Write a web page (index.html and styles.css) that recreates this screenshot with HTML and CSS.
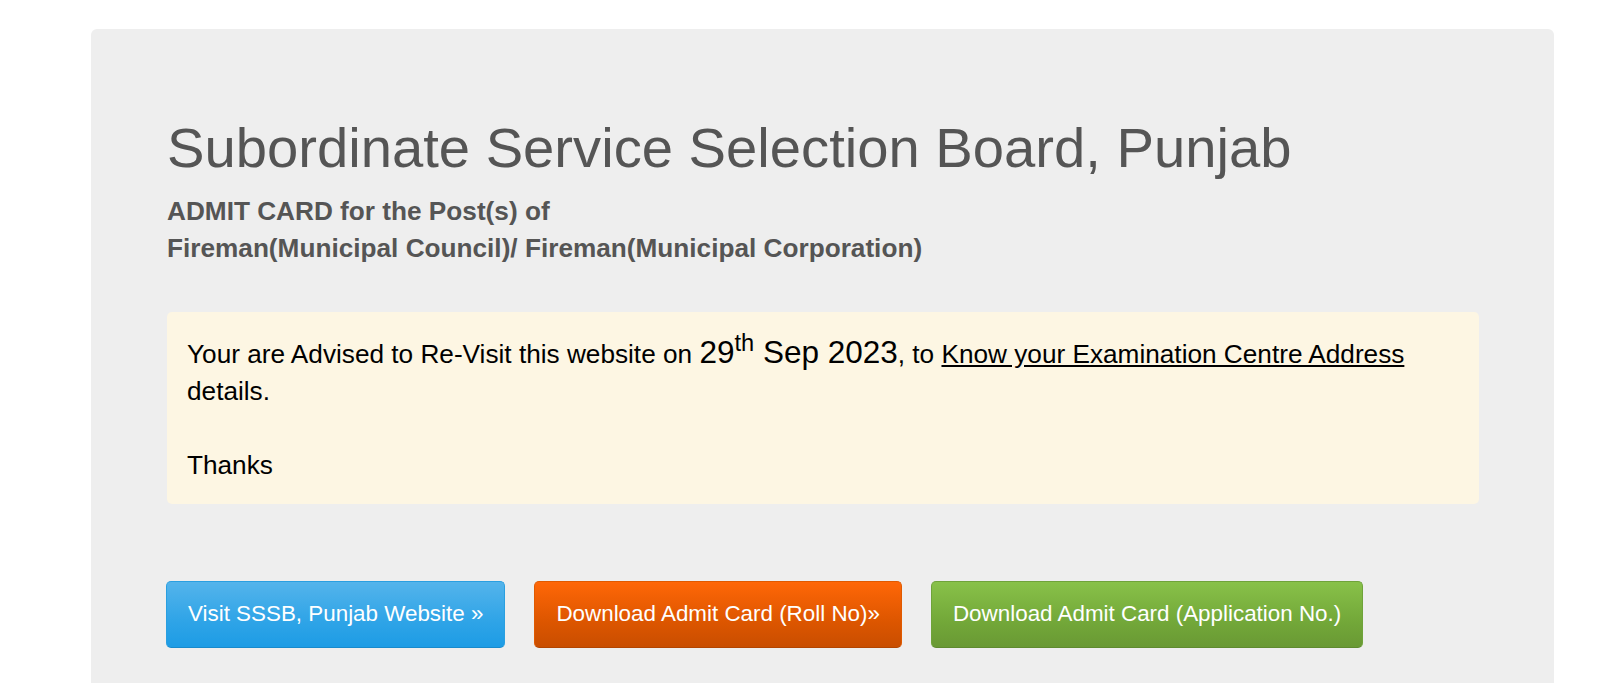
FILE: index.html
```html
<!DOCTYPE html>
<html lang="en">
<head>
    <meta charset="UTF-8">
    <meta name="viewport" content="width=device-width, initial-scale=1.0">
    <title>SSSB Punjab - Admit Card</title>
    <link rel="stylesheet" href="styles.css">
</head>
<body>
    <!-- 主面板 -->
    <div class="jumbotron">
        <h1>Subordinate Service Selection Board, Punjab</h1>
        <p class="post">ADMIT CARD for the Post(s) of<br>Fireman(Municipal Council)/ Fireman(Municipal Corporation)</p>

        <!-- 提示框 -->
        <div class="notice">
            <p>Your are Advised to Re-Visit this website on <span class="date">29<sup>th</sup> Sep 2023</span>, to <a href="#">Know your Examination Centre Address</a> details.<br><br>Thanks</p>
        </div>

        <!-- 按钮 -->
        <div class="actions">
            <a href="#" class="btn btn-blue">Visit SSSB, Punjab Website &raquo;</a>
            <a href="#" class="btn btn-orange">Download Admit Card (Roll No)&raquo;</a>
            <a href="#" class="btn btn-green">Download Admit Card (Application No.)</a>
        </div>
    </div>
</body>
</html>
```

FILE: styles.css
```css
/* 全局样式 */
html, body {
    margin: 0;
    padding: 0;
    height: 100%;
    overflow: hidden;
    background: #ffffff;
    font-family: 'Liberation Sans', Arial, sans-serif;
}

/* 主面板 */
.jumbotron {
    margin: 29px 53px 0 91px;
    padding: 88px 75px 200px 75px;
    background-color: #eeeeee;
    border-radius: 6px;
}

.jumbotron h1 {
    margin: 0 0 14px 1px;
    font-size: 56.2px;
    line-height: 1.1;
    font-weight: normal;
    color: #555555;
}

.post {
    margin: 0 0 45px 1px;
    font-size: 26.2px;
    line-height: 37px;
    font-weight: bold;
    color: #555555;
}

/* 提示框 */
.notice {
    margin-left: 1px;
    padding: 22px 20px 20px 20px;
    background-color: #fdf6e3;
    border-radius: 5px;
}

.notice p {
    margin: 0;
    font-size: 26.2px;
    line-height: 37px;
    color: #000000;
}

.notice .date {
    font-size: 31.5px;
}

.notice sup {
    font-size: 75%;
    line-height: 0;
    position: relative;
    top: -0.5em;
    vertical-align: baseline;
}

.notice a {
    color: #000000;
    text-decoration: underline;
}

/* 按钮 */
.actions {
    display: flex;
    gap: 29px;
    margin-top: 77px;
}

.btn {
    display: inline-block;
    padding: 15px 21px 17px 21px;
    font-size: 22.4px;
    line-height: 33px;
    color: #ffffff;
    text-decoration: none;
    border: 1px solid transparent;
    border-radius: 5px;
}

.btn-blue {
    background-image: linear-gradient(#54b4eb, #2fa4e7 60%, #1d9ce5);
    border-color: #2a9fe0 #2a9fe0 #178acc;
}

.btn-orange {
    background-image: linear-gradient(#ff6707, #dd5600 60%, #c94e00);
    border-color: #e05a00 #e05a00 #b34500;
}

.btn-green {
    background-image: linear-gradient(#88c149, #73a839 60%, #699934);
    border-color: #6fa33a #6fa33a #5e8a2f;
}
```
